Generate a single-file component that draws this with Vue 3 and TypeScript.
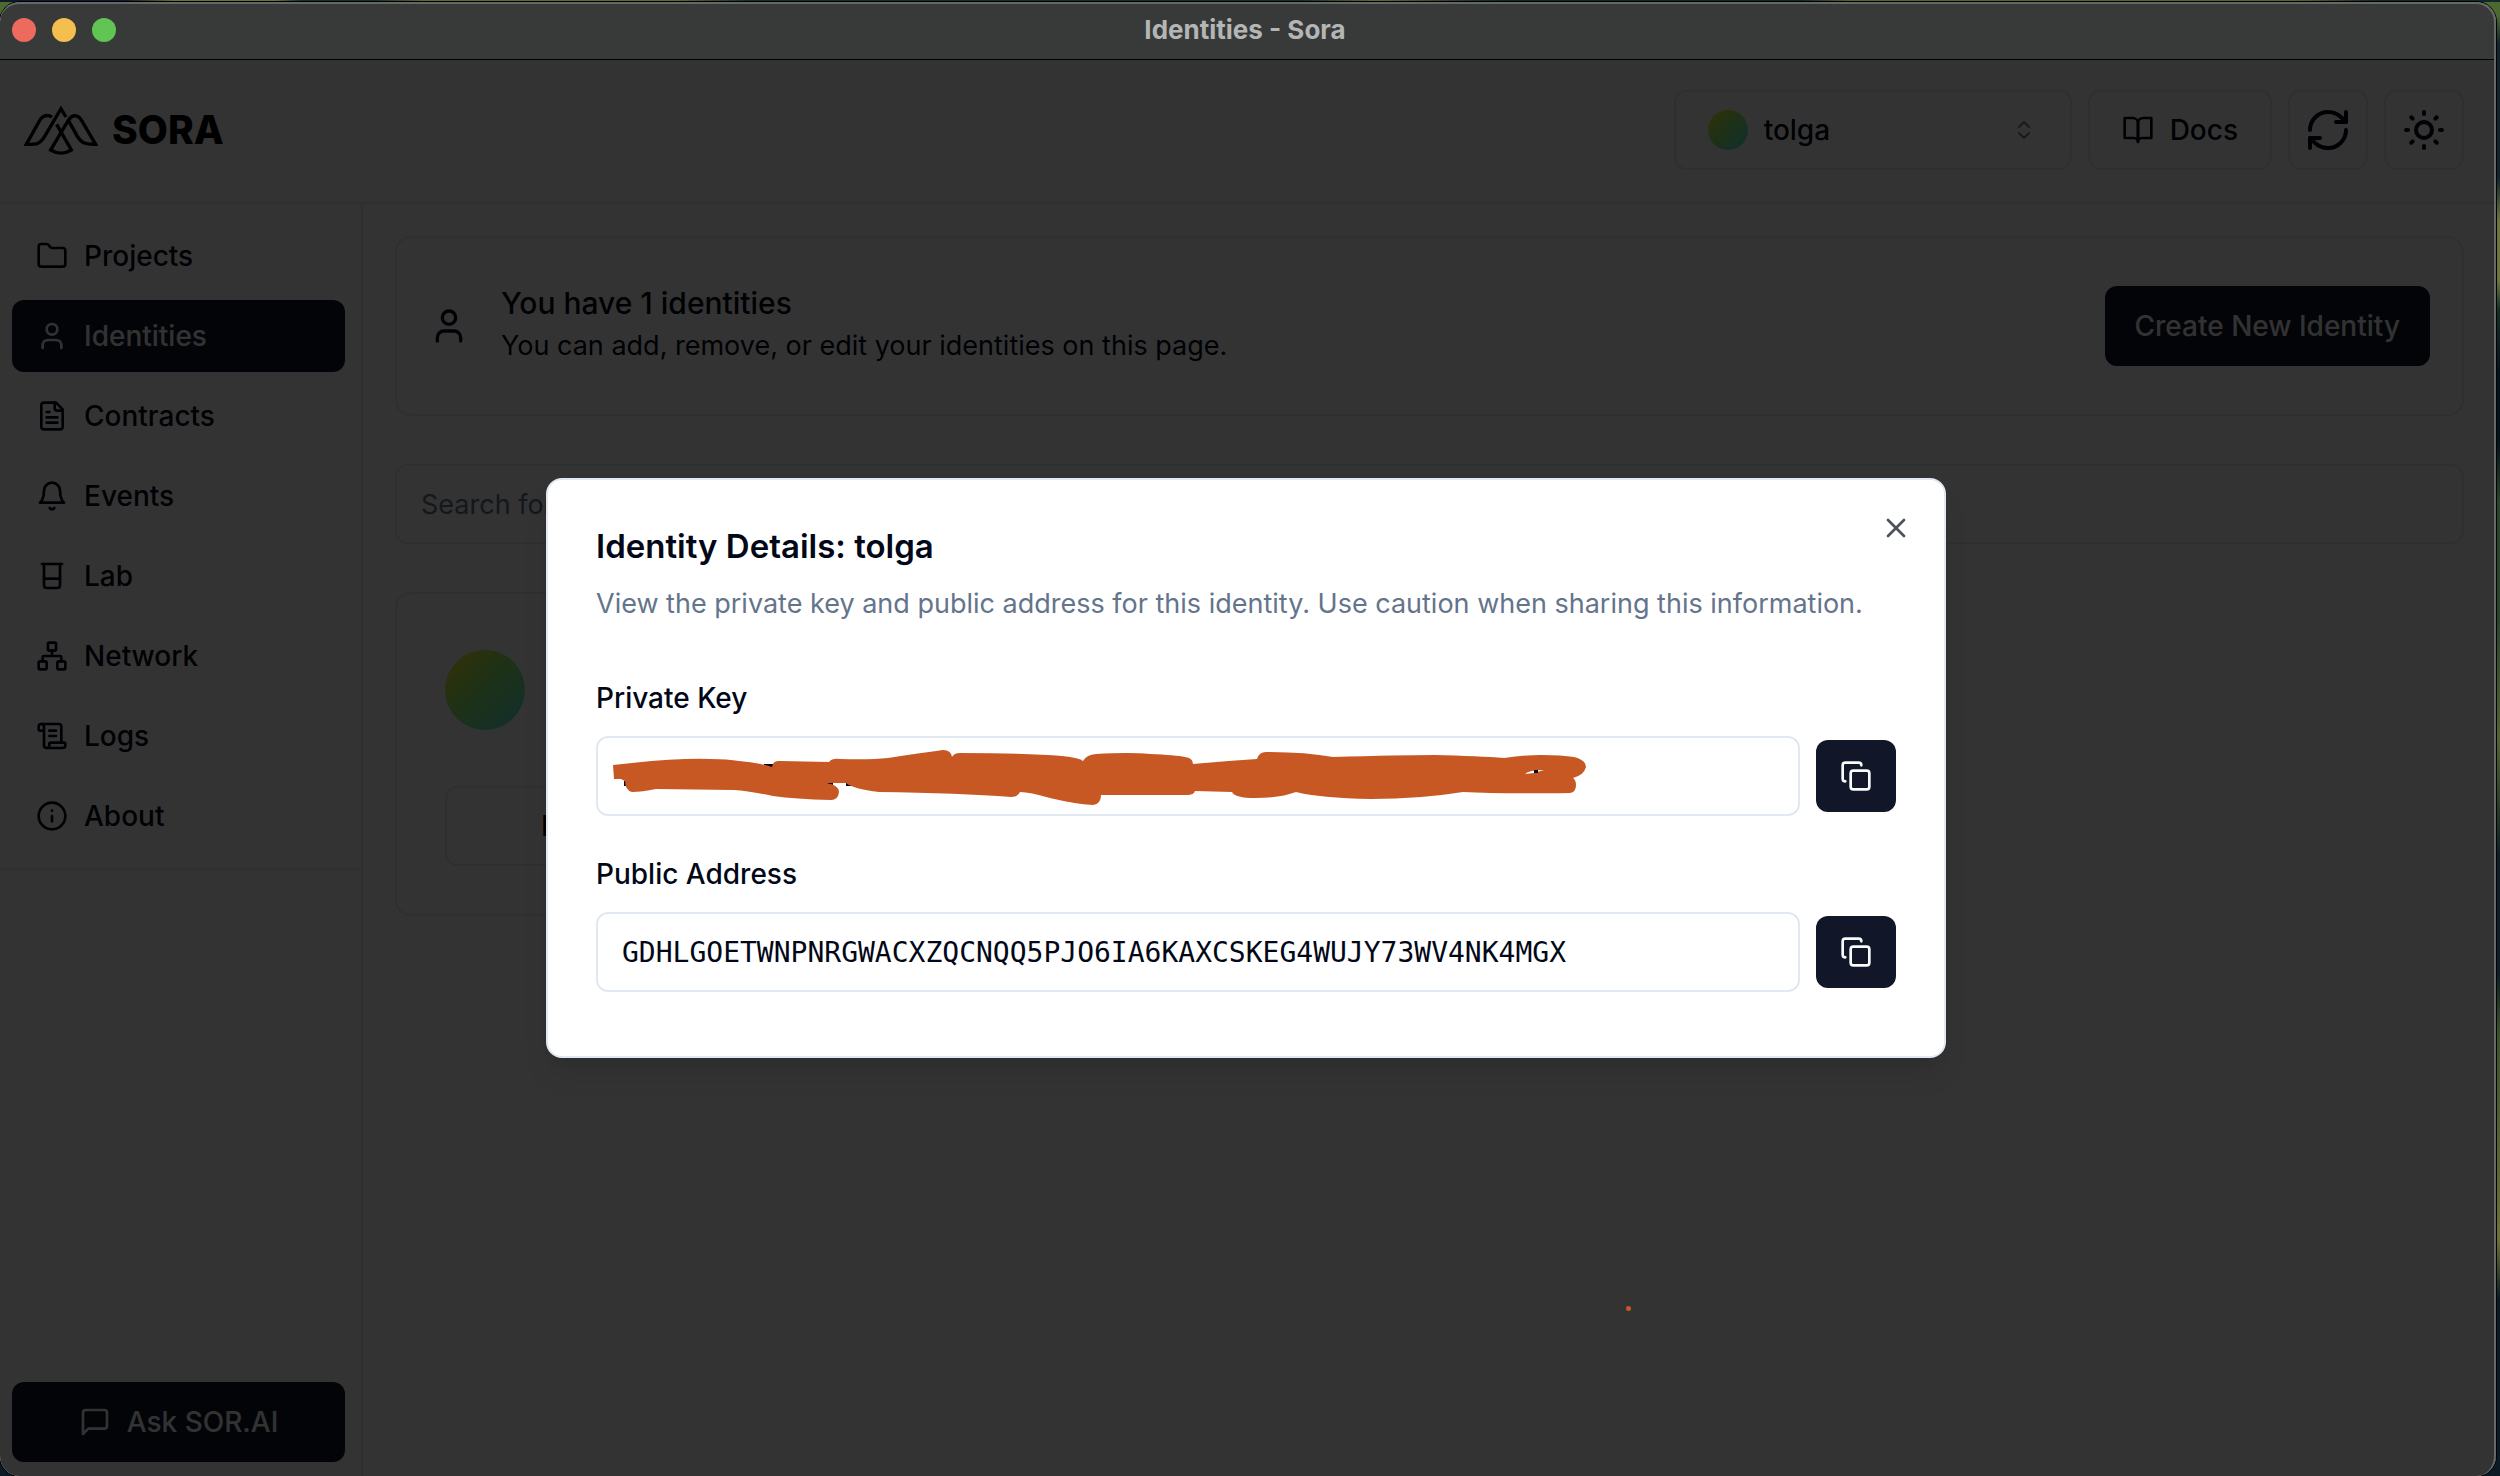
<script setup lang="ts">
import { ref } from 'vue'

interface NavItem {
  label: string
  icon: string
}

const icons: Record<string, string> = {
  folder:
    '<path d="M20 20a2 2 0 0 0 2-2V8a2 2 0 0 0-2-2h-7.9a2 2 0 0 1-1.69-.9L9.6 3.9A2 2 0 0 0 7.93 3H4a2 2 0 0 0-2 2v13a2 2 0 0 0 2 2Z"/>',
  user: '<path d="M19 21v-2a4 4 0 0 0-4-4H9a4 4 0 0 0-4 4v2"/><circle cx="12" cy="7" r="4"/>',
  file: '<path d="M15 2H6a2 2 0 0 0-2 2v16a2 2 0 0 0 2 2h12a2 2 0 0 0 2-2V7Z"/><path d="M14 2v4a2 2 0 0 0 2 2h4"/><path d="M10 9H8"/><path d="M16 13H8"/><path d="M16 17H8"/>',
  bell: '<path d="M6 8a6 6 0 0 1 12 0c0 7 3 9 3 9H3s3-2 3-9"/><path d="M10.3 21a1.94 1.94 0 0 0 3.4 0"/>',
  beaker: '<path d="M4.5 3h15"/><path d="M6 3v16a2 2 0 0 0 2 2h8a2 2 0 0 0 2-2V3"/><path d="M6 14h12"/>',
  network:
    '<rect x="16" y="16" width="6" height="6" rx="1"/><rect x="2" y="16" width="6" height="6" rx="1"/><rect x="9" y="2" width="6" height="6" rx="1"/><path d="M5 16v-3a1 1 0 0 1 1-1h12a1 1 0 0 1 1 1v3"/><path d="M12 12V8"/>',
  scroll:
    '<path d="M15 12h-5"/><path d="M15 8h-5"/><path d="M19 17V5a2 2 0 0 0-2-2H4"/><path d="M8 21h12a2 2 0 0 0 2-2v-1a1 1 0 0 0-1-1H11a1 1 0 0 0-1 1v1a2 2 0 1 1-4 0V5a2 2 0 1 0-4 0v2a1 1 0 0 0 1 1h3"/>',
  info: '<circle cx="12" cy="12" r="10"/><path d="M12 16v-4"/><path d="M12 8h.01"/>',
  message: '<path d="M21 15a2 2 0 0 1-2 2H7l-4 4V5a2 2 0 0 1 2-2h14a2 2 0 0 1 2 2z"/>',
  book: '<path d="M2 3h6a4 4 0 0 1 4 4v14a3 3 0 0 0-3-3H2z"/><path d="M22 3h-6a4 4 0 0 0-4 4v14a3 3 0 0 1 3-3h7z"/>',
  refresh:
    '<path d="M3 12a9 9 0 0 1 9-9 9.75 9.75 0 0 1 6.74 2.74L21 8"/><path d="M21 3v5h-5"/><path d="M21 12a9 9 0 0 1-9 9 9.75 9.75 0 0 1-6.74-2.74L3 16"/><path d="M8 16H3v5"/>',
  sun: '<circle cx="12" cy="12" r="4"/><path d="M12 3v1"/><path d="M12 20v1"/><path d="M3 12h1"/><path d="M20 12h1"/><path d="m18.364 5.636-.707.707"/><path d="m6.343 17.657-.707.707"/><path d="m5.636 5.636.707.707"/><path d="m17.657 17.657.707.707"/>',
  chevrons: '<path d="m7 15 5 5 5-5"/><path d="m7 9 5-5 5 5"/>',
  copy: '<rect width="14" height="14" x="8" y="8" rx="2"/><path d="M4 16c-1.1 0-2-.9-2-2V4c0-1.1.9-2 2-2h10c1.1 0 2 .9 2 2"/>',
  close: '<path d="M18 6 6 18"/><path d="m6 6 12 12"/>',
}

const navItems: NavItem[] = [
  { label: 'Projects', icon: 'folder' },
  { label: 'Identities', icon: 'user' },
  { label: 'Contracts', icon: 'file' },
  { label: 'Events', icon: 'bell' },
  { label: 'Lab', icon: 'beaker' },
  { label: 'Network', icon: 'network' },
  { label: 'Logs', icon: 'scroll' },
  { label: 'About', icon: 'info' },
]

const active = ref('Identities')
const identity = ref('tolga')
const search = ref('')
const privateKey = ref('')
const publicAddress = ref('GDHLGOETWNPNRGWACXZQCNQQ5PJO6IA6KAXCSKEG4WUJY73WV4NK4MGX')
const open = ref(true)
</script>

<template>
  <div class="desktop">
    <div class="window">
      <div class="titlebar">
        <div class="lights">
          <span class="light red"></span>
          <span class="light yellow"></span>
          <span class="light green"></span>
        </div>
        <span class="window-title">Identities - Sora</span>
      </div>

      <div class="app">
        <header class="header">
          <a class="brand" href="#">
            <svg class="logo" viewBox="44 45 222 150" aria-hidden="true">
              <path d="M128 81C112 72 99 78 90 93L51 163C82 164 92 162 106 139L155 56L170 81" />
              <path d="M142 103L186 180Q155 199 124 180L177 91C189 72 206 73 217 92L259 163C228 164 217 160 204 139L179 94" />
            </svg>
            <span class="brand-name">SORA</span>
          </a>
          <div class="tools">
            <div class="picker">
              <span class="avatar small"></span>
              <select v-model="identity" aria-label="Active identity">
                <option value="tolga">tolga</option>
              </select>
              <svg class="icon chevrons" viewBox="0 0 24 24" v-html="icons.chevrons"></svg>
            </div>
            <button class="outline docs" type="button">
              <svg class="icon" viewBox="0 0 24 24" v-html="icons.book"></svg>
              Docs
            </button>
            <button class="outline square" type="button" aria-label="Refresh">
              <svg class="icon large" viewBox="0 0 24 24" v-html="icons.refresh"></svg>
            </button>
            <button class="outline square" type="button" aria-label="Toggle theme">
              <svg class="icon large" viewBox="0 0 24 24" v-html="icons.sun"></svg>
            </button>
          </div>
        </header>

        <div class="body">
          <aside class="sidebar">
            <nav class="nav">
              <a
                v-for="item in navItems"
                :key="item.label"
                href="#"
                class="nav-item"
                :class="{ active: item.label === active }"
                @click.prevent="active = item.label"
              >
                <svg class="icon" viewBox="0 0 24 24" v-html="icons[item.icon]"></svg>
                {{ item.label }}
              </a>
            </nav>
            <div class="ask">
              <button class="primary" type="button">
                <svg class="icon" viewBox="0 0 24 24" v-html="icons.message"></svg>
                Ask SOR.AI
              </button>
            </div>
          </aside>

          <main class="main">
            <section class="card summary">
              <svg class="icon medium" viewBox="0 0 24 24" v-html="icons.user"></svg>
              <div class="summary-text">
                <h1>You have 1 identities</h1>
                <p>You can add, remove, or edit your identities on this page.</p>
              </div>
              <button class="primary" type="button">Create New Identity</button>
            </section>
            <input
              v-model="search"
              class="field search"
              type="text"
              aria-label="Search identities"
              placeholder="Search for an identity..."
            />
            <div class="grid">
              <section class="card identity">
                <div class="identity-head">
                  <span class="avatar"></span>
                </div>
                <button class="outline edit" type="button">Edit</button>
              </section>
            </div>
          </main>
        </div>

        <div v-if="open" class="overlay">
          <div class="dialog" role="dialog" aria-labelledby="dialog-title">
            <button class="close" type="button" aria-label="Close" @click="open = false">
              <svg class="icon" viewBox="0 0 24 24" v-html="icons.close"></svg>
            </button>
            <h2 id="dialog-title">Identity Details: tolga</h2>
            <p class="hint">
              View the private key and public address for this identity. Use caution when sharing this information.
            </p>
            <div class="fields">
              <div class="group">
                <label for="private-key">Private Key</label>
                <div class="row">
                  <div class="covered">
                    <input id="private-key" v-model="privateKey" class="field mono" type="text" readonly />
                    <svg class="scribble" viewBox="596 736 1203 80" preserveAspectRatio="xMinYMin meet" aria-hidden="true">
                      <path class="ink" d="M764 764h9v4h-9zM827 781h6v4h-6zM846 782h5v4h-5zM624 781h5v5h-5z" />
                      <path
                        class="marker"
                        d="M613 765L632 763Q680 758 710 759Q728 759 739 761Q760 763 772 767Q773 760 780 761L829 762Q832 758 840 759Q870 760 888 758Q920 753 943 750Q951 750 952 757Q954 753 960 753Q1030 753 1062 756Q1080 758 1083 761Q1086 755 1096 754Q1130 752 1150 754Q1176 755 1185 757Q1193 758 1193 764Q1225 761 1257 759Q1259 752 1266 752Q1305 752 1333 757Q1400 755 1434 755Q1480 756 1504 758Q1525 755 1541 755Q1562 755 1574 757Q1586 760 1586 767Q1584 775 1573 778Q1576 780 1576 785Q1576 792 1570 793Q1500 794 1463 792Q1420 799 1371 799Q1320 798 1296 792Q1280 798 1255 798Q1235 798 1232 792L1195 791Q1194 795 1187 795L1101 795Q1101 804 1093 805Q1075 804 1050 798Q1030 792 1020 792Q1018 797 1011 797Q960 793 879 792Q853 789 846 783L826 783Q839 785 839 792Q838 800 831 800Q795 799 773 796Q750 791 734 790L656 789Q642 792 632 792Q625 790 625 781L621 779L614 779ZM1525 774Q1529 770 1544 770L1534 773Z"
                      />
                      <path class="ink" d="M1534 770h4v3h-4z" />
                    </svg>
                  </div>
                  <button class="copy" type="button" aria-label="Copy private key">
                    <svg class="icon" viewBox="0 0 24 24" v-html="icons.copy"></svg>
                  </button>
                </div>
              </div>
              <div class="group">
                <label for="public-address">Public Address</label>
                <div class="row">
                  <input id="public-address" v-model="publicAddress" class="field mono" type="text" readonly />
                  <button class="copy" type="button" aria-label="Copy public address">
                    <svg class="icon" viewBox="0 0 24 24" v-html="icons.copy"></svg>
                  </button>
                </div>
              </div>
            </div>
          </div>
          <span class="speck"></span>
        </div>
      </div>
    </div>
  </div>
</template>

<style>
body {
  margin: 0;
  background: #0b1a22;
}
</style>

<style scoped>
* {
  box-sizing: border-box;
}

.desktop {
  display: flex;
  min-height: 100vh;
  padding: 2px 4px 0 0;
  background:
    linear-gradient(90deg, #0c1c2c 0 5%, #6b7434 7% 11%, #16332b 12% 15%, #5f6a33 17% 27%, #14302b 30% 52%, #5d6b38 55%, #10272c 60% 72%, #57652c 74% 92%, #12282a 95%) top / 100% 2px no-repeat,
    linear-gradient(180deg, #4c6a30 0 1%, #10242b 3% 12%, #6d7438 15% 19%, #123026 21%, #07131c 25% 30%, #27452a 34% 42%, #55622f 50%, #0c1f25 58% 66%, #3d5129 70%, #6c7033 84%, #0b1a24 88% 100%);
  font-family: Inter, "Liberation Sans", sans-serif;
  font-size: 27px;
  line-height: 40px;
  color: #020817;
}

.window {
  position: relative;
  display: flex;
  flex: 1;
  flex-direction: column;
  min-width: 0;
  overflow: hidden;
  border-radius: 20px;
  background: #fff;
  box-shadow: 0 0 0 1px #000;
}

.window::after {
  content: "";
  position: absolute;
  inset: 0;
  border: 2px solid #666867;
  border-left: 0;
  border-bottom: 0;
  border-radius: 20px;
  pointer-events: none;
}

.titlebar {
  position: relative;
  display: flex;
  align-items: center;
  justify-content: center;
  height: 58px;
  padding: 0 6px 2px 0;
  border-bottom: 1px solid #000;
  background: #383a39;
}

.lights {
  position: absolute;
  left: 12px;
  display: flex;
  gap: 16px;
}

.light {
  width: 24px;
  height: 24px;
  border-radius: 50%;
}

.red {
  background: #ed6a5e;
}

.yellow {
  background: #f5bf4f;
}

.green {
  background: #61c554;
}

.window-title {
  font-size: 26px;
  font-weight: 700;
  color: #b4b5b4;
}

.app {
  position: relative;
  display: flex;
  flex: 1;
  flex-direction: column;
  margin-left: -4px;
}

.header {
  display: flex;
  align-items: center;
  justify-content: space-between;
  padding: 30px 32px 32px 28px;
  border-bottom: 2px solid #e2e8f0;
}

.brand {
  display: flex;
  align-items: center;
  gap: 14px;
  color: #000;
  text-decoration: none;
}

.logo {
  width: 74px;
  height: 50px;
  fill: none;
  stroke: currentColor;
  stroke-width: 10;
}

.brand-name {
  font-size: 39px;
  font-weight: 800;
}

.tools {
  display: flex;
  gap: 16px;
}

.icon {
  flex: none;
  width: 32px;
  height: 32px;
  fill: none;
  stroke: currentColor;
  stroke-width: 2;
  stroke-linecap: round;
  stroke-linejoin: round;
}

.icon.medium {
  width: 40px;
  height: 40px;
}

.icon.large {
  width: 48px;
  height: 48px;
}

button,
select,
input {
  font: inherit;
  color: inherit;
}

button {
  display: flex;
  align-items: center;
  justify-content: center;
  gap: 16px;
  margin: 0;
  border-radius: 12px;
  font-size: 28px;
  font-weight: 500;
  white-space: nowrap;
}

.outline {
  height: 80px;
  border: 2px solid #e2e8f0;
  background: #fff;
}

.docs {
  padding: 0 32px;
}

.square {
  width: 80px;
  padding: 0;
}

.primary {
  height: 80px;
  padding: 0 30px;
  border: 0;
  background: #111628;
  color: #f8fafc;
}

.picker {
  position: relative;
  display: flex;
  align-items: center;
  width: 398px;
}

.picker select {
  width: 100%;
  height: 80px;
  padding: 0 72px 0 88px;
  appearance: none;
  border: 2px solid #e2e8f0;
  border-radius: 12px;
  background: #fff;
  font-size: 28px;
  font-weight: 500;
}

.avatar {
  width: 80px;
  height: 80px;
  border-radius: 50%;
  background: linear-gradient(135deg, #faf01e 0%, #8cf578 50%, #5ae6eb 100%);
}

.avatar.small {
  position: absolute;
  left: 34px;
  width: 40px;
  height: 40px;
}

.chevrons {
  position: absolute;
  right: 36px;
  width: 24px;
  height: 24px;
  opacity: 0.5;
}

.body {
  display: flex;
  flex: 1;
}

.sidebar {
  display: flex;
  flex: none;
  flex-direction: column;
  justify-content: space-between;
  width: 367px;
  border-right: 2px solid #e2e8f0;
}

.nav {
  display: flex;
  flex-direction: column;
  gap: 8px;
  padding: 16px;
  border-bottom: 2px solid #e2e8f0;
}

.nav-item {
  display: flex;
  align-items: center;
  gap: 16px;
  height: 72px;
  padding: 0 24px;
  border-radius: 12px;
  font-size: 28px;
  font-weight: 500;
  color: inherit;
  text-decoration: none;
}

.nav-item.active {
  background: #111628;
  color: #f8fafc;
}

.ask {
  padding: 14px 16px;
}

.ask .primary {
  width: 100%;
}

.main {
  display: flex;
  flex: 1;
  flex-direction: column;
  gap: 48px;
  min-width: 0;
  padding: 32px;
}

.card {
  border: 2px solid #e2e8f0;
  border-radius: 16px;
}

.summary {
  display: flex;
  align-items: center;
  gap: 32px;
  padding: 48px 32px;
}

.summary-text {
  display: flex;
  flex: 1;
  flex-direction: column;
  gap: 6px;
}

h1,
h2,
p {
  margin: 0;
}

h1 {
  font-size: 30px;
  font-weight: 500;
  line-height: 34px;
}

.field {
  width: 100%;
  height: 80px;
  padding: 0 24px;
  border: 2px solid #e2e8f0;
  border-radius: 12px;
  outline: 0;
  background: #fff;
}

.field::placeholder {
  color: #64748b;
  opacity: 1;
}

.grid {
  display: grid;
  grid-template-columns: repeat(3, 1fr);
  gap: 32px;
}

.identity {
  display: flex;
  flex-direction: column;
  align-items: flex-start;
  gap: 48px;
  padding: 48px;
}

.identity-head {
  display: flex;
  align-items: center;
  height: 96px;
}

.edit {
  padding: 0 94px;
}

.overlay {
  position: absolute;
  inset: 0;
  display: flex;
  align-items: center;
  justify-content: center;
  background: rgba(0, 0, 0, 0.8);
}

.dialog {
  position: relative;
  width: 1400px;
  max-width: 100%;
  padding: 48px 48px 64px;
  border: 2px solid #e2e8f0;
  border-radius: 16px;
  background: #fff;
  box-shadow: 0 20px 30px -6px rgba(0, 0, 0, 0.1), 0 8px 12px -8px rgba(0, 0, 0, 0.1);
}

h2 {
  font-size: 33px;
  font-weight: 600;
  line-height: 36px;
}

.hint {
  margin-top: 20px;
  color: #64748b;
}

.close {
  position: absolute;
  top: 32px;
  right: 32px;
  padding: 0;
  border: 0;
  background: none;
  opacity: 0.7;
}

.fields {
  display: flex;
  flex-direction: column;
  gap: 44px;
  margin-top: 60px;
}

.group {
  display: flex;
  flex-direction: column;
  gap: 24px;
}

label {
  font-size: 28px;
  font-weight: 500;
  line-height: 28px;
}

.row {
  display: flex;
  align-items: center;
  gap: 16px;
}

.covered {
  position: relative;
  display: flex;
  flex: 1;
}

.mono {
  font-family: "DejaVu Sans Mono", "Liberation Mono", monospace;
  font-size: 28px;
}

.scribble {
  position: absolute;
  inset: 0;
  width: 100%;
  height: 100%;
  pointer-events: none;
}

.marker {
  fill: #c75823;
  fill-rule: evenodd;
}

.ink {
  fill: #020817;
}

.copy {
  flex: none;
  width: 80px;
  height: 72px;
  padding: 0;
  border: 0;
  background: #111628;
  color: #f8fafc;
}

.speck {
  position: absolute;
  top: 88%;
  left: 65.2%;
  width: 5px;
  height: 5px;
  border-radius: 50%;
  background: #c75823;
}
</style>
